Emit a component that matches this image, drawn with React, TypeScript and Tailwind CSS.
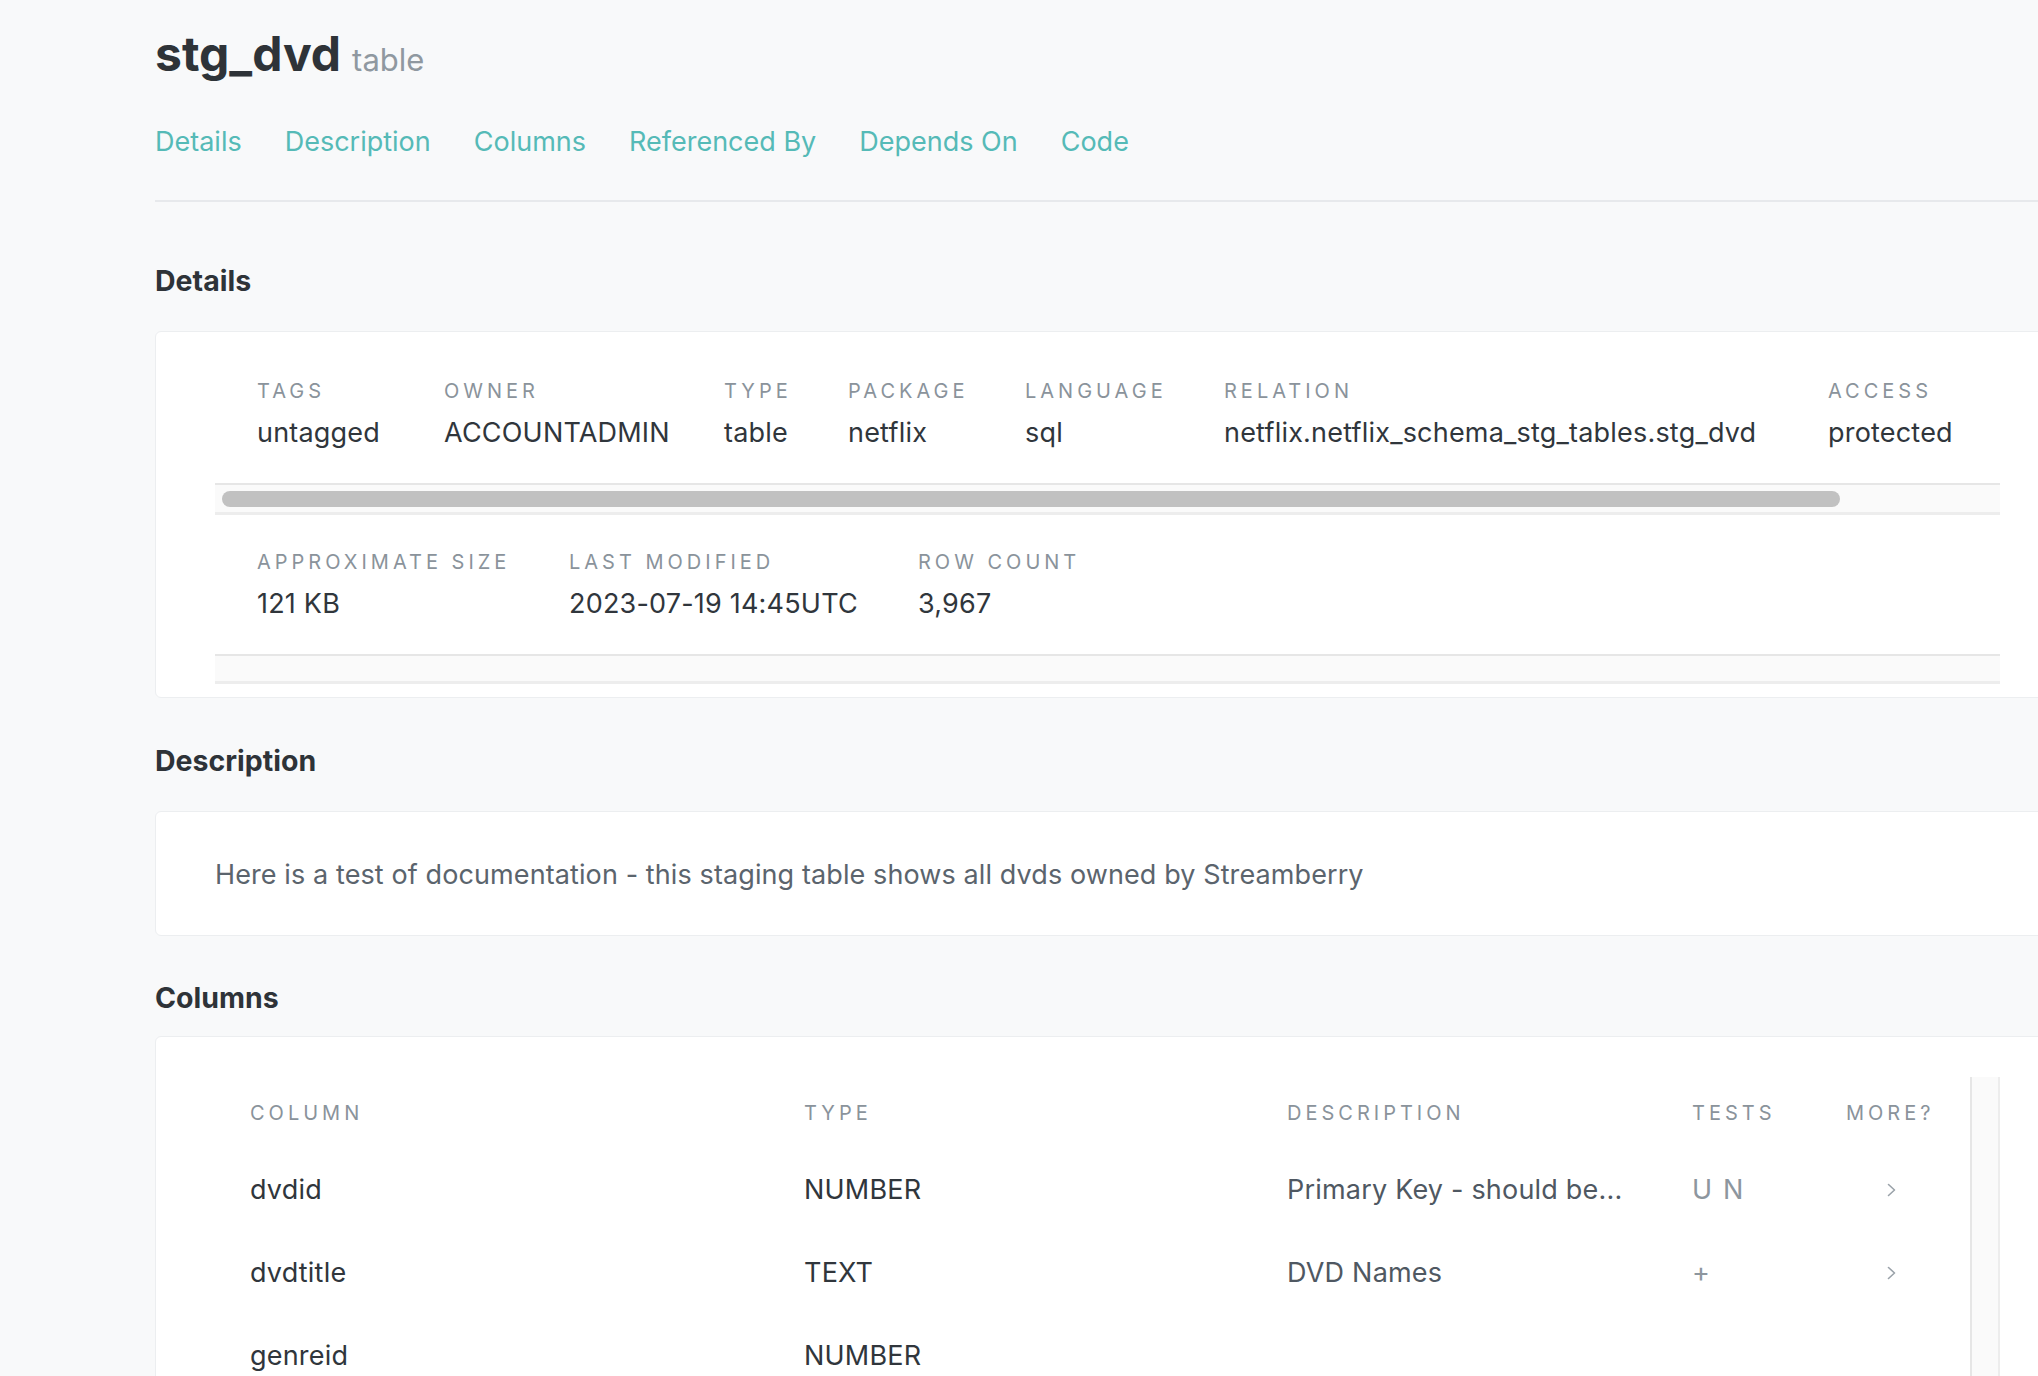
import React from "react";

const labelCls =
  "text-[20px] leading-[28px] tracking-[0.2em] text-[#8a939b] uppercase whitespace-nowrap";
const valueCls =
  "text-[27px] leading-[36px] tracking-[0.2px] text-[#30363c] mt-[10px] whitespace-nowrap";

const row1 = [
  { label: "Tags", value: "untagged", w: "w-[187px]" },
  { label: "Owner", value: "ACCOUNTADMIN", w: "w-[280px]" },
  { label: "Type", value: "table", w: "w-[124px]" },
  { label: "Package", value: "netflix", w: "w-[177px]" },
  { label: "Language", value: "sql", w: "w-[199px]" },
  { label: "Relation", value: "netflix.netflix_schema_stg_tables.stg_dvd", w: "w-[604px]" },
  { label: "Access", value: "protected", w: "w-[200px]" },
];

const row2 = [
  { label: "Approximate Size", value: "121 KB", w: "w-[312px]" },
  { label: "Last Modified", value: "2023-07-19 14:45UTC", w: "w-[349px]" },
  { label: "Row Count", value: "3,967", w: "w-[200px]" },
];

const cols = [
  { name: "dvdid", type: "NUMBER", desc: "Primary Key - should be...", tests: "U N", more: true },
  { name: "dvdtitle", type: "TEXT", desc: "DVD Names", tests: "+", more: true },
  { name: "genreid", type: "NUMBER", desc: "", tests: "", more: false },
  { name: "genrename", type: "TEXT", desc: "", tests: "", more: false },
];

function Chevron() {
  return (
    <svg width="9" height="14" viewBox="0 0 9 14" fill="none">
      <polyline points="1.5,1.5 7.5,7 1.5,12.5" stroke="#9aa2a9" strokeWidth="1.6" strokeLinecap="round" strokeLinejoin="round" />
    </svg>
  );
}

function Track({ thumb, h }: { thumb: boolean; h: string }) {
  return (
    <div className={`${h} border-t-2 border-t-[#e6e6e6] border-b-[3px] border-b-[#ededed] bg-[#fafafa] pt-[6px] pl-[7px]`}>
      {thumb && <div className="h-[16px] w-[1618px] rounded-full bg-[#c1c1c1]" />}
    </div>
  );
}

export default function App() {
  return (
    <div className="w-[2038px] h-[1376px] overflow-hidden bg-[#f8f9fa] font-[family-name:Inter,sans-serif]">
      <div className="pl-[155px] w-[2060px]">
        <div className="w-[1905px]">
          {/* Title */}
          <div className="pt-[26px] flex items-baseline">
            <h1 className="text-[48px] leading-[56px] font-bold text-[#2e3338]">stg_dvd</h1>
            <span className="ml-[11px] text-[31px] text-[#8f98a0]">table</span>
          </div>

          {/* Nav */}
          <div className="mt-[40px] pb-[40px] border-b-2 border-[#e7e9ec] flex gap-[43px] text-[27px] leading-[36px] text-[#55bab7]">
            <span>Details</span>
            <span>Description</span>
            <span>Columns</span>
            <span>Referenced By</span>
            <span>Depends On</span>
            <span>Code</span>
          </div>

          {/* Details */}
          <h2 className="mt-[61px] text-[28.5px] leading-[36px] font-bold text-[#2e3338]">Details</h2>
          <div className="mt-[32px] bg-white border border-[#eceef0] rounded-[6px] px-[59px] pt-[12px] pb-[13px]">
            <div className="flex pl-[42px] pt-[33px] pb-[32px]">
              {row1.map((c) => (
                <div key={c.label} className={`${c.w} shrink-0`}>
                  <div className={labelCls}>{c.label}</div>
                  <div className={valueCls}>{c.value}</div>
                </div>
              ))}
            </div>
            <Track thumb h="h-[32px]" />
            <div className="flex pl-[42px] pt-[33px] pb-[32px]">
              {row2.map((c) => (
                <div key={c.label} className={`${c.w} shrink-0`}>
                  <div className={labelCls}>{c.label}</div>
                  <div className={valueCls}>{c.value}</div>
                </div>
              ))}
            </div>
            <Track thumb={false} h="h-[30px]" />
          </div>

          {/* Description */}
          <h2 className="mt-[45px] text-[28.5px] leading-[36px] font-bold text-[#2e3338]">Description</h2>
          <div className="mt-[32px] bg-white border border-[#eceef0] rounded-[6px] px-[59px] pt-[45px] pb-[42px]">
            <p className="text-[27px] leading-[36px] tracking-[0.1px] text-[#5b646d] whitespace-nowrap">
              Here is a test of documentation - this staging table shows all dvds owned by Streamberry
            </p>
          </div>

          {/* Columns */}
          <h2 className="mt-[44px] text-[28.5px] leading-[36px] font-bold text-[#2e3338]">Columns</h2>
          <div className="mt-[20px] bg-white border border-[#eceef0] rounded-[6px] px-[59px] pt-[40px] h-[520px]">
            <div className="flex h-[480px]">
              <div className="flex-1">
                <div className="flex pl-[35px] pt-[22px] pb-[22px]">
                  <div className={`${labelCls} w-[554px]`}>Column</div>
                  <div className={`${labelCls} w-[483px]`}>Type</div>
                  <div className={`${labelCls} w-[405px]`}>Description</div>
                  <div className={`${labelCls} w-[154px]`}>Tests</div>
                  <div className={`${labelCls} w-[120px]`}>More?</div>
                </div>
                {cols.map((r) => (
                  <div key={r.name} className="flex items-center h-[83px] pl-[35px] text-[27px] leading-[36px] tracking-[0.2px] whitespace-nowrap">
                    <div className="w-[554px] text-[#30363c]">{r.name}</div>
                    <div className="w-[483px] text-[#30363c]">{r.type}</div>
                    <div className="w-[405px] text-[#4f5862]">{r.desc}</div>
                    <div className="w-[154px] text-[#8d969e] tracking-[0.06em]">{r.tests}</div>
                    <div className="w-[120px] pl-[41px] flex items-center">{r.more && <Chevron />}</div>
                  </div>
                ))}
              </div>
              <div className="w-[30px] shrink-0 border-l-2 border-l-[#e6e6e6] border-r-2 border-r-[#ededed] bg-[#fafafa]" />
            </div>
          </div>
        </div>
      </div>
    </div>
  );
}
